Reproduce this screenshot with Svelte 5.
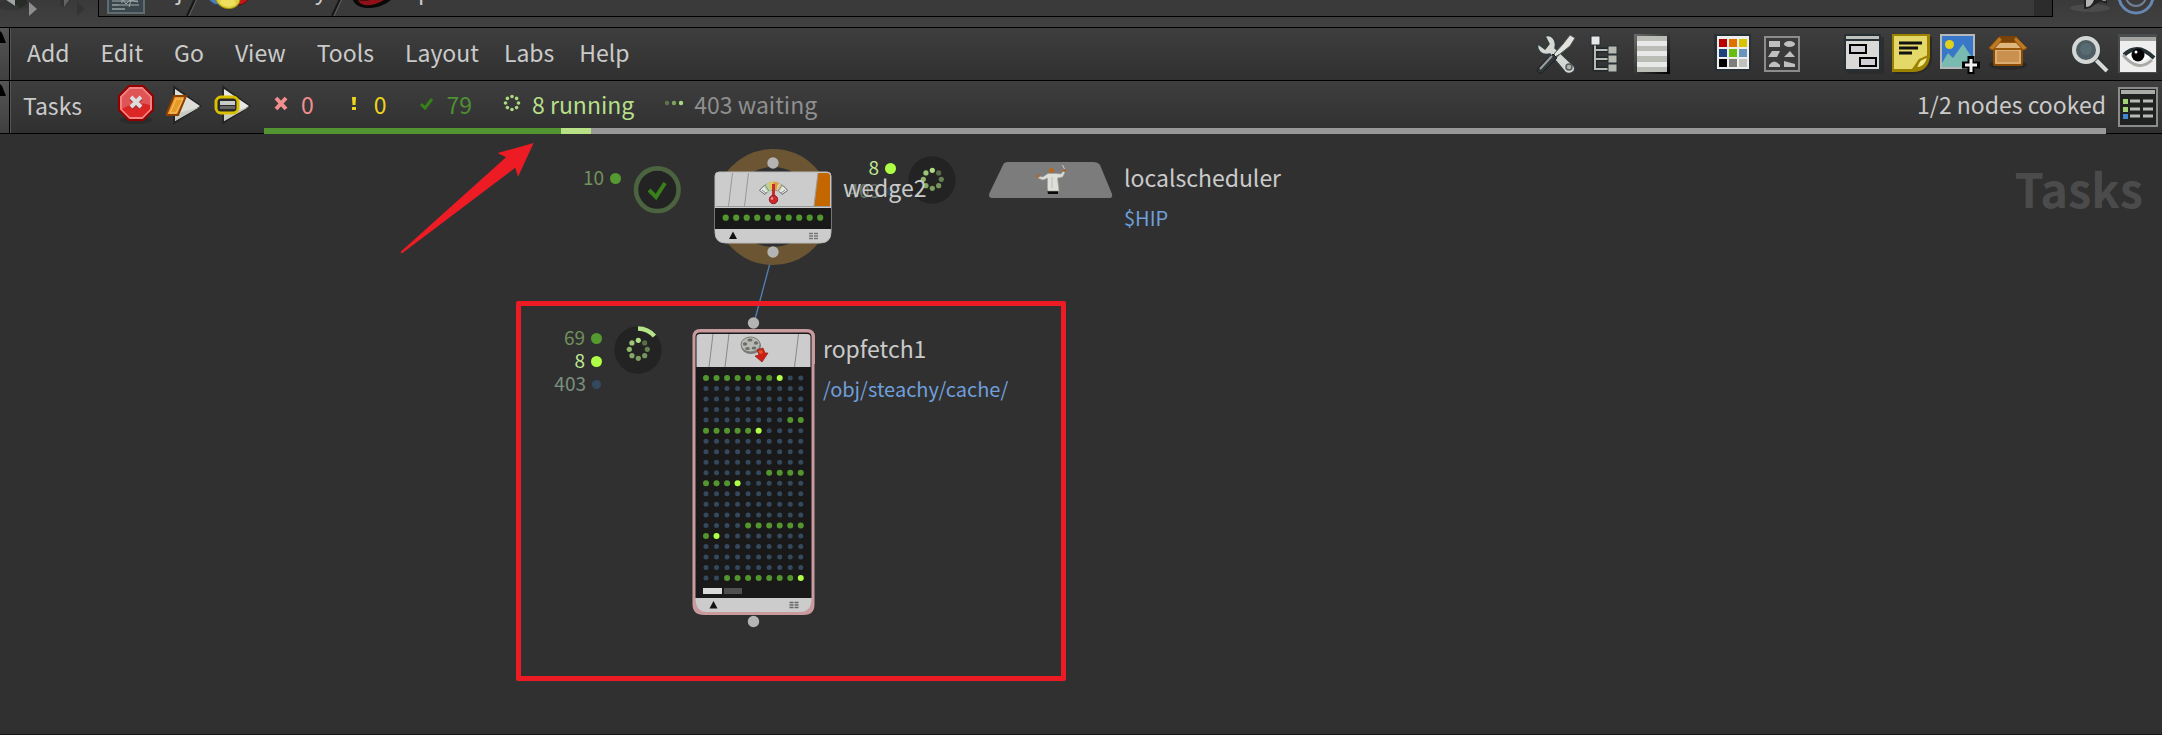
<script>
  const menus = ['Add', 'Edit', 'Go', 'View', 'Tools', 'Layout', 'Labs', 'Help'];

  const cooked = 79;
  const running = 8;
  const waiting = 403;
  const total = cooked + running + waiting;

  // c = cooked, r = running, w = waiting
  const workItems = [
    'cccccccrww',
    'wwwwwwwwww',
    'wwwwwwwwww',
    'wwwwwwwwww',
    'wwwwwwwwcc',
    'cccccrwwww',
    'wwwwwwwwww',
    'wwwwwwwwww',
    'wwwwwwwwww',
    'wwwwwwcccc',
    'cccrwwwwww',
    'wwwwwwwwww',
    'wwwwwwwwww',
    'wwwwwwwwww',
    'wwwwcccccc',
    'crwwwwwwww',
    'wwwwwwwwww',
    'wwwwwwwwww',
    'wwwwwwwwww',
    'wwcccccccr'
  ];

  const dotColors = { c: '#53962f', r: '#aeff46', w: '#34495e' };
  const swatches = ['#b80000', '#e07000', '#d8c400', '#1c437e', '#68bf14', '#6a93bd', '#000', '#7d7f7a', '#bfc1ba'];
  const spokes = [0, 1, 2, 3, 4, 5, 6, 7].map((i) => ({
    x: Math.sin((i * Math.PI) / 4),
    y: -Math.cos((i * Math.PI) / 4)
  }));
  const spokeColors = ['#b0dc85', '#5a6d49', '#66804f', '#76955c', '#7b9e5e', '#85a965', '#8fb56c', '#9cc577'];
</script>

{#snippet gutter()}
  <div class="gutter">
    <svg width="9" height="20" viewBox="0 0 9 20"><path d="M0 3L2 5L6 15H0Z" fill="#000" /></svg>
  </div>
{/snippet}

{#snippet spinner(arc)}
  <svg class="badge-icon" viewBox="0 0 48 48">
    <circle cx="24" cy="24" r="23.7" fill="#232323" />
    {#if arc}
      <path d="M24 2.5A21.5 21.5 0 0 1 40.4 10.2" fill="none" stroke="#b5e588" stroke-width="4.4" />
    {/if}
    {#each spokes as s, i}
      <circle cx={24.3 + s.x * 9} cy={23.3 + s.y * 9} r="2.6" fill={spokeColors[i]} />
    {/each}
  </svg>
{/snippet}

<div class="network-editor">
  <header class="path-strip">
    <div class="history">
      <svg width="90" height="54" viewBox="0 -38 90 54">
        <ellipse cx="13" cy="5" rx="17" ry="5" fill="#303030" opacity=".6" />
        <path d="M0 -8H27V4L20 8L17 5H14V7L3 -5Z" fill="#272c27" />
        <path d="M2 -3L7 -8H15V6Z" fill="#a0a4a0" />
        <path d="M29 2L37 9L29 16Z" fill="#8e8e8e" />
        <path d="M47 -6H70L73 -2L64 7L60 5V0H48Z" fill="#343434" />
        <path d="M64 7V-5H73Z" fill="#626262" />
        <path d="M77 2L85 9L77 16Z" fill="#343434" />
      </svg>
    </div>
    <div class="path-box">
      <svg class="crumb-icon" width="38" height="54" viewBox="106 -38 38 54">
        <rect x="106" y="-24" width="38" height="38" fill="#5f6d73" />
        <rect x="108" y="-22" width="34" height="34" fill="#39464b" />
        <path d="M112 -3L121 -2L125 4L129 0L137 2M111 1H137M111 5H138M121 3V-8M128 7L130 0" stroke="#a3abac" fill="none" />
        <path d="M111 9H124M111 5H118" stroke="#7e898b" stroke-width="2" />
      </svg>
      <span>obj</span>
      <svg class="slash" width="12" height="54" viewBox="0 -38 12 54"><path d="M0 16L25 -38" stroke="#161616" stroke-width="2" /><path d="M2 16L27 -38" stroke="#626262" /></svg>
      <svg class="crumb-icon" width="44" height="54" viewBox="208 -38 44 54">
        <circle cx="219" cy="-7" r="12" fill="#4d7fba" stroke="#26446a" />
        <circle cx="238" cy="-7" r="12" fill="#c31717" stroke="#6b0909" />
        <path d="M216 0C219 -3 221 -6 222 -10H234L240 0C238 11 221 12 216 0Z" fill="#dfcf3b" stroke="#9e8d0c" />
        <path d="M222 -3H233L236 4C230 8 224 7 220 3Z" fill="#fff184" opacity=".5" />
      </svg>
      <span>teachy</span>
      <svg class="slash" width="12" height="54" viewBox="0 -38 12 54"><path d="M0 16L25 -38" stroke="#161616" stroke-width="2" /><path d="M2 16L27 -38" stroke="#626262" /></svg>
      <svg class="crumb-icon" width="40" height="54" viewBox="355 -38 40 54">
        <path d="M355 0C359 12 384 10 395 -2V-15H357Z" fill="#090909" />
        <path d="M360 0C363 8 378 7 390 -3L383 -4C374 1 366 1 360 0Z" fill="#8f1017" />
        <path d="M363 -3C372 -2 379 -4 385 -8" stroke="#777" stroke-width="3" />
      </svg>
      <span>topnet1</span>
      <i></i>
    </div>
    <div class="pins">
      <svg width="109" height="54" viewBox="2053 -38 109 54">
        <ellipse cx="2090" cy="7" rx="20" ry="4" fill="#4b4b4b" />
        <path d="M2084 -10V8C2094 8 2094 1 2102 1L2107 3V-10Z" fill="#222" />
        <path d="M2086 -8V6C2092 6 2094 0 2096 -8Z" fill="#b4b4b4" />
        <path d="M2098 -4L2103 0H2106V-5Z" fill="#888" />
        <circle cx="2136" cy="-5" r="17" fill="none" stroke="#6786b1" stroke-width="3" />
        <circle cx="2136" cy="-5" r="10" fill="none" stroke="#718099" stroke-width="2" />
      </svg>
    </div>
  </header>

  <div class="row menu-row">
    {@render gutter()}
    <nav>
      {#each menus as menu}
        <button>{menu}</button>
      {/each}
    </nav>
    <div class="toolbar">
      <div class="group">
        <button aria-label="Tools">
          <svg viewBox="0 0 40 40">
            <path d="M9 2C16 0 21 6 19 14L38 32C41 37 34 42 29 38L14 20C6 22 0 17 2 10L9 15L13 10Z" fill="#d5d7d3" stroke="#303b3e" stroke-width="1.5" />
            <path d="M23 20L15 28" stroke="#555" stroke-width="2" />
            <path d="M34 1L39 4L34 12L24 20L19 23L18 20L27 10Z" fill="#e2e3dd" stroke="#4e5757" />
            <path d="M17 20L21 24L6 39C3 40 0 38 2 34Z" fill="#303537" stroke="#1b2022" />
            <path d="M16 22L4 35" stroke="#9b9f9f" stroke-width="2" />
            <circle cx="33" cy="33" r="3" fill="#b1b4ad" stroke="#555b59" stroke-width="1.5" />
          </svg>
        </button>
        <button aria-label="Tree view">
          <svg viewBox="0 0 40 40">
            <path d="M11 11V35H24M11 16H24M11 25H24" fill="none" stroke="#20282b" stroke-width="5" />
            <path d="M11 11V35H24M11 16H24M11 25H24" fill="none" stroke="#b8bbb3" stroke-width="2" />
            <rect x="7" y="2" width="9" height="9" fill="#e8e8e8" stroke="#263034" />
            <g fill="#b7bab3" stroke="#263034"><rect x="24" y="12" width="9" height="8" /><rect x="24" y="21" width="9" height="8" /><rect x="24" y="30" width="9" height="8" /></g>
          </svg>
        </button>
        <button aria-label="List view">
          <svg viewBox="0 0 40 40">
            <defs><linearGradient id="list-edge" x1="0" y1="0" x2="1" y2="1"><stop stop-color="#6a6a6a" /><stop offset=".7" stop-color="#222" /><stop offset="1" stop-color="#000" /></linearGradient></defs>
            <path d="M2 0H38V40H2Z" fill="url(#list-edge)" /><path d="M5 2H35V38H5Z" fill="#babdb5" /><path d="M5 7H35V12H5ZM5 17H35V22H5ZM5 28H35V33H5Z" fill="#e8e8e8" />
          </svg>
        </button>
      </div>
      <div class="group">
        <button aria-label="Color palette">
          <svg viewBox="0 0 40 40">
            <path d="M0 0H37V37H0Z" fill="#273035" /><path d="M3 2H35V35H3Z" fill="#eee" />
            {#each swatches as color, i}
              <rect x={5 + (i % 3) * 10} y={5 + Math.floor(i / 3) * 10} width="8" height="8" fill={color} />
            {/each}
          </svg>
        </button>
        <button aria-label="Shape palette">
          <svg viewBox="0 0 40 40">
            <rect x="3" y="3" width="34" height="34" fill="#3a3a3a" stroke="#8c8c8c" stroke-width="2" />
            <g fill="#bfbfbf"><path d="M7 7H18V13H7ZM10 17H18L15 23H6ZM28 17L33 23H22ZM7 33V31Q12 24 18 31V33ZM22 27L33 30V33H22Z" /><ellipse cx="27.500" cy="10" rx="5.500" ry="3" /></g>
          </svg>
        </button>
      </div>
      <div class="group">
        <button aria-label="Network box">
          <svg viewBox="0 0 40 40">
            <path d="M3 3H40V40H3Z" fill="#2a2a2a" opacity=".7" /><path d="M0 0H37V37H0Z" fill="#273035" /><path d="M2 2H35V5H2Z" fill="#bfc2bc" /><path d="M2 7H35V35H2Z" fill="#d9dad8" />
            <g fill="#d0d0d4" stroke="#000" stroke-width="2"><rect x="6" y="11" width="16" height="8" /><rect x="16" y="24" width="16" height="8" /></g>
          </svg>
        </button>
        <button aria-label="Sticky note">
          <svg viewBox="0 0 40 40">
            <path d="M3 3H40V28Q34 40 22 40H3Z" fill="#292929" /><path d="M0 0H38V23Q36 38 21 38H0Z" fill="#9c8200" /><path d="M2 2H35V23L27 25L20 35H2Z" fill="#e4d868" />
            <path d="M23 34C27 31 25 26 30 25L36 22C35 30 30 35 23 34Z" fill="#f2e987" stroke="#9c8200" stroke-width="2" /><path d="M7 9H30M7 14H26M7 19H20" stroke="#111" stroke-width="3" />
          </svg>
        </button>
        <button aria-label="Background image">
          <svg viewBox="0 0 40 40">
            <rect x="1" y="1" width="33" height="33" fill="#3977c9" stroke="#b5b7bb" stroke-width="2" /><circle cx="9.500" cy="10.500" r="4.500" fill="#e0d11c" />
            <path d="M2 33V29L8 19L13 24L23 10L33 25V33Z" fill="#79bbb1" /><path d="M31 22V40M22 31H40" stroke="#000" stroke-width="7" /><path d="M31 25V38M25 31H37" stroke="#eee" stroke-width="3" />
          </svg>
        </button>
        <button aria-label="Asset box">
          <svg viewBox="0 0 40 40">
            <ellipse cx="20" cy="31" rx="19" ry="5" fill="#292929" />
            <path d="M12 3H28L34 11H6Z" fill="#b46a0e" stroke="#774207" stroke-width="2" />
            <rect x="6" y="13" width="28" height="18" rx="1" fill="#ca904e" stroke="#8a4b05" stroke-width="2" /><rect x="8" y="16" width="24" height="13" fill="none" stroke="#edc997" />
            <path d="M10 8H29L36 15H4Z" fill="#deb57c" stroke="#985609" stroke-width="2" /><path d="M13 4H27L29 8H10Z" fill="#794407" /><path d="M11 3L1 14L5 16L14 6M28 3L39 14L35 16L26 6" fill="#bd7a25" stroke="#915106" />
          </svg>
        </button>
      </div>
      <div class="group">
        <button aria-label="Find">
          <svg viewBox="0 0 40 40">
            <path d="M25 25L37 37" stroke="#283033" stroke-width="7" /><path d="M25 25L37 37" stroke="#d7d8d6" stroke-width="4" />
            <circle cx="16" cy="16" r="14.500" fill="#353e42" stroke="#30383b" /><circle cx="16" cy="16" r="12" fill="#4f5e65" stroke="#d5d7d4" stroke-width="4" /><circle cx="16" cy="15" r="6" fill="#637780" opacity=".5" />
          </svg>
        </button>
        <button aria-label="Display options">
          <svg viewBox="0 0 40 40">
            <rect x="0" y="0" width="39" height="39" fill="#4a4d4e" /><path d="M2 3H38V38H2Z" fill="#eee" /><path d="M2 3H38V7H2Z" fill="#a2a59f" />
            <path d="M7 21Q20 11 34 21Q20 35 7 21Z" fill="#fff" /><path d="M6 21Q20 8 36 24" fill="none" stroke="#263136" stroke-width="4" /><path d="M5 21Q20 39 34 26" fill="none" stroke="#a9aca6" stroke-width="3" /><circle cx="20" cy="21" r="6.500" fill="#050505" /><circle cx="18" cy="18" r="1.500" fill="#fff" />
          </svg>
        </button>
      </div>
    </div>
  </div>

  <div class="row status-row">
    {@render gutter()}
    <span class="status-title">Tasks</span>
    <div class="cook-controls">
      <button aria-label="Cancel cook">
        <svg viewBox="0 0 40 40">
          <ellipse cx="18" cy="35" rx="16" ry="4" fill="#272727" opacity=".6" />
          <path d="M11 1H25L35 11V25L25 35H11L1 25V11Z" fill="#ef8583" stroke="#940000" stroke-width="2" /><path d="M12 4H24L32 12V24L24 32H12L4 24V12Z" fill="#df5555" /><path d="M4 24Q18 15 32 20V24L24 32H12Z" fill="#dc2626" />
          <path d="M13 13L23 23M23 13L13 23" stroke="#a83030" stroke-width="5" /><path d="M13 12L23 22M23 12L13 22" stroke="#ddd" stroke-width="4" />
        </svg>
      </button>
      <button aria-label="Dirty and cook selected">
        <svg viewBox="0 0 40 40">
          <path d="M7 0L36 21L7 40Z" fill="#252525" /><path d="M9 4L34 21L9 36Z" fill="#deded9" /><path d="M9 36L34 22L9 29Z" fill="#c7cbc0" /><path d="M8 11H20L12 30H0Z" fill="#e89a27" stroke="#8d3e02" stroke-width="2" /><path d="M10 14H17L10 28H4Z" fill="none" stroke="#f7c46d" />
        </svg>
      </button>
      <button aria-label="Cook selected">
        <svg viewBox="0 0 40 40">
          <path d="M8 0L37 21L8 40Z" fill="#252525" /><path d="M10 4L35 21L10 36Z" fill="#e7e8e5" /><path d="M10 36L35 22L10 29Z" fill="#c7cbc0" /><rect x="2" y="12" width="22" height="16" rx="5" fill="#292929" stroke="#d9bf00" stroke-width="3" /><path d="M6 16H21V20H6Z" fill="#c8cac8" /><path d="M6 21H21V24H6Z" fill="#656565" />
        </svg>
      </button>
    </div>
    <div class="summary">
      <div class="counts">
        <span class="count failed"><svg viewBox="0 0 16 16"><path d="M3 2L13 13M13 2L3 13" stroke="currentColor" stroke-width="4" /></svg>0</span>
        <span class="count warned"><svg viewBox="0 0 16 16"><path d="M6 1H10L9.500 9H6.500ZM6 11H10V14H6Z" fill="currentColor" /></svg>0</span>
        <span class="count cooked"><svg viewBox="0 0 16 16"><path d="M2 8L6 12L13 3" fill="none" stroke="#38801a" stroke-width="3" /></svg>{cooked}</span>
        <span class="count running">
          <svg viewBox="0 0 16 16">
            {#each spokes as s}
              <circle cx={8 + s.x * 6.5} cy={7 + s.y * 6.5} r="1.8" fill="#abda81" />
            {/each}
          </svg>{running} running
        </span>
        <span class="count waiting"><svg viewBox="0 0 16 16"><circle cx="1" cy="7" r="2.200" fill="#5f744f" /><circle cx="8" cy="7" r="2.200" fill="#7fa362" /><circle cx="15" cy="7" r="2.200" fill="#a9db7d" /></svg>{waiting} waiting</span>
        <span class="nodes-cooked">1/2 nodes cooked</span>
      </div>
      <div class="progress">
        <div class="done" style="width: {(cooked / total) * 100}%"></div>
        <div class="active" style="width: {(running / total) * 100}%"></div>
      </div>
    </div>
    <button class="details" aria-label="Task graph table">
      <svg viewBox="0 0 40 40">
        <rect x="1" y="1" width="38" height="38" fill="#202222" stroke="#8b8b8b" stroke-width="2" /><path d="M3 3H37V7H3Z" fill="#aaaca8" />
        <path d="M5 12H10V17H5ZM5 20H10V25H5Z" fill="#a3d475" /><path d="M5 27H10V32H5Z" fill="#3f86d5" /><path d="M12 14H22M25 14H35M12 22H22M25 22H35M12 29H22M25 29H35" stroke="#b8bab6" stroke-width="3" />
      </svg>
    </button>
  </div>

  <main class="canvas">
    <span class="watermark">Tasks</span>

    <!-- wire from wedge2 to ropfetch1 -->
    <svg class="wire" viewBox="740 110 50 90"><path d="M773 118L754 189" stroke="#527fb9" stroke-width="1.300" /></svg>

    <ul class="tallies wedge-tallies">
      <li class="tally-cooked">10<i></i></li>
    </ul>
    <div class="badge wedge-badge">
      <svg class="badge-icon" viewBox="0 0 48 48"><circle cx="24.300" cy="23.700" r="21.300" fill="#232323" stroke="#4c6340" stroke-width="4.600" /><path d="M16 24L23 31L32 17" fill="none" stroke="#38801a" stroke-width="4" /></svg>
    </div>

    <svg class="wedge-body" viewBox="714 14 118 118">
      <circle cx="773" cy="73" r="49" fill="none" stroke="#6b5532" stroke-width="18" />
      <g fill="#b4b4b4"><circle cx="773" cy="29" r="5.700" /><circle cx="773" cy="118" r="5.700" /></g>
      <path d="M715 42Q715 38 719 38H827Q831 38 831 42V98Q831 109 820 109H726Q715 109 715 98Z" fill="#ccc" stroke="#bbb" />
      <path d="M715 74H831V95H715Z" fill="#191919" />
      <path d="M818 39H827Q830 39 830 42V72H814Z" fill="#c46700" />
      <path d="M716 72.500H830M732.500 39L728.500 72M748.500 39L744.500 72M818 39L814 72" stroke="#999" fill="none" />
      {#each Array(10) as _, i}
        <circle cx={725.7 + i * 10.5} cy="83.700" r="3.100" fill={dotColors.c} />
      {/each}
      <path d="M733 97.500L737 105H729Z" fill="#111" />
      <path d="M809 99.500H818.500M809 102H818.500M809 104.500H818.500" stroke="#777" stroke-width="1.600" stroke-dasharray="4 1" />
      <!-- gauge with thermometer -->
      <path d="M759.500 56.500A16.500 16.500 0 0 1 787.500 56.500L782 60.500A10 10 0 0 0 765 60.500Z" fill="#e4e8e4" stroke="#6a6a6a" />
      <path d="M764 52L769 48L771 57L768 59Z" fill="#b9cf9c" /><path d="M768.500 48.500L773.500 47.500V56H770.500Z" fill="#dfc95a" />
      <path d="M773.500 47.500L778.500 48.500L776.500 56H773.500Z" fill="#e09a45" /><path d="M778.500 48.500L783 52L779 58L776.500 56Z" fill="#d8cc90" />
      <path d="M762 56L766 59M765 51L769 57M782 51L778 57M785 56L781 59" stroke="#75949a" />
      <path d="M773.500 50V62" stroke="#c3302a" stroke-width="3" /><circle cx="773.500" cy="65.500" r="4.200" fill="#cf272c" stroke="#8c2428" />
      <circle cx="772" cy="64.500" r="1.200" fill="#f0a0a0" />
    </svg>

    <ul class="tallies scheduler-tallies">
      <li class="tally-running">8<i></i></li>
      <li class="tally-waiting faded">403<i></i></li>
    </ul>
    <div class="badge scheduler-badge">{@render spinner(false)}</div>
    <div class="label wedge-label"><span>wedge2</span></div>

    <svg class="scheduler-body" viewBox="988 26 126 40">
      <path d="M1003 31Q1004 28 1008 28H1093Q1098 28 1100 31L1112 60Q1113 64 1109 64H992Q988 64 989.500 59Z" fill="#7c7c7c" />
      <!-- scientist in a lab coat -->
      <path d="M1047 55H1058V60H1048Z" fill="#090909" />
      <path d="M1048 39.500H1056L1061 40L1063.500 37L1065 38L1062.500 43L1057.500 44L1059 57H1047.500L1047.500 44L1043 46L1038 44L1039 42.500L1043 43Z" fill="#dedfd9" stroke="#a2a29e" stroke-width=".6" />
      <path d="M1052 43V54" stroke="#b9bcb7" /><circle cx="1051.500" cy="36.500" r="2.500" fill="#bb681e" />
      <circle cx="1038.300" cy="42" r="1.500" fill="#b36626" /><circle cx="1064.500" cy="36.500" r="1.500" fill="#b36626" /><path d="M1064.500 35L1062.500 31" stroke="#ccc" />
    </svg>
    <div class="label scheduler-label"><span>localscheduler</span><a href="#hip">$HIP</a></div>

    <ul class="tallies rop-tallies">
      <li class="tally-cooked">69<i></i></li>
      <li class="tally-running">8<i></i></li>
      <li class="tally-waiting">403<i></i></li>
    </ul>
    <div class="badge rop-badge">{@render spinner(true)}</div>

    <svg class="rop-body" viewBox="690 182 128 314">
      <g fill="#b4b4b4"><circle cx="753.500" cy="189" r="5.700" /><circle cx="753.500" cy="487.500" r="5.700" /></g>
      <path d="M700 195H807Q815 195 815 203V230H814.500V470Q814.500 481 804 481H704Q692.500 481 692.500 470V203Q692.500 195 700 195Z" fill="#c99b9e" />
      <path d="M695.500 203Q695.500 198.500 700 198.500H807Q811.500 198.500 811.500 203V464H695.500Z" fill="#191919" />
      <path d="M696.500 203Q696.500 200 700 200H807Q810.500 200 810.500 203V233H696.500Z" fill="#ccc" />
      <path d="M695.500 464H811.500Q811.500 478 800 478H707Q695.500 478 695.500 464Z" fill="#ccc" />
      <path d="M713 200L709 233M729 200L725 233M798.500 200L794.500 233" stroke="#888" />
      {#each workItems as line, row}
        {#each line as item, col}
          <circle cx={706 + col * 10.53} cy={244 + row * 10.53} r={item === 'w' ? 2.5 : 3} fill={dotColors[item]} />
        {/each}
      {/each}
      <path d="M703 454H722V460H703Z" fill="#dadada" /><path d="M724 454H742V460H724Z" fill="#505050" />
      <path d="M713.500 467L717.500 474.500H709.500Z" fill="#111" />
      <path d="M789.500 468.500H799M789.500 471H799M789.500 473.500H799" stroke="#666" stroke-width="1.600" stroke-dasharray="4 1" />
      <!-- film reel with a red arrow -->
      <ellipse cx="751" cy="212" rx="10" ry="8" fill="#777" /><ellipse cx="750.500" cy="210.500" rx="9.500" ry="7.500" fill="#b9b9b3" stroke="#7c7c79" />
      <g fill="#6c6c69"><ellipse cx="750" cy="206" rx="2.600" ry="1.600" /><ellipse cx="756" cy="209" rx="2.200" ry="1.700" /><ellipse cx="745" cy="210" rx="2.200" ry="1.700" /><ellipse cx="747.500" cy="214.500" rx="2.300" ry="1.600" /><ellipse cx="754" cy="214" rx="2.300" ry="1.600" /></g>
      <path d="M757 216L763 214L765 219L768 219L762 228L755 222L759 221Z" fill="#cc2015" stroke="#941c10" stroke-width=".7" /><path d="M758 217L762 216L763 219L760 220Z" fill="#df5427" />
    </svg>
    <div class="label rop-label"><span>ropfetch1</span><a href="#cache">/obj/steachy/cache/</a></div>

    <div class="highlight"></div>
    <svg class="pointer" viewBox="400 8 136 114"><path d="M533.700 9L497.700 19L506 23.300L401 117.500Q400 119.500 402.500 119L515.300 33.700L518 42.700Z" fill="#ed1c24" /></svg>
  </main>
</div>

<style>
  :global(body) {
    background: #303030;
  }

  .network-editor {
    display: flex;
    flex-direction: column;
    min-height: 100vh;
    box-sizing: border-box;
    border-bottom: 1px solid #161616;
    overflow: hidden;
    font-family: "Noto Sans CJK SC", "Open Sans", sans-serif;
    font-size: 23px;
    line-height: 28px;
    color: #cacaca;
  }

  button {
    padding: 0;
    border: 0;
    background: none;
    color: inherit;
    font: inherit;
    cursor: pointer;
  }

  svg {
    display: block;
    flex: none;
  }

  .path-strip {
    display: flex;
    align-items: flex-end;
    height: 27px;
    box-sizing: border-box;
    padding-bottom: 10px;
    overflow: hidden;
    background: linear-gradient(#3a3a3a, #414141);
  }

  .history {
    width: 98px;
    margin-bottom: 1px;
  }

  .path-box {
    flex: 1;
    display: flex;
    align-items: center;
    height: 54px;
    padding-left: 8px;
    border: 1px solid #000;
    border-top: 0;
    background: #3a3a3a;
  }

  .path-box span {
    padding-left: 3px;
  }

  .path-box i {
    width: 18px;
    height: 54px;
    margin-left: auto;
    background: #2c2c2c;
  }

  .slash {
    margin: 0 9px 0 5px;
    overflow: visible;
  }

  .row {
    display: flex;
    align-items: center;
    height: 53px;
    box-sizing: border-box;
    background: linear-gradient(#3e3e3e, #303030);
  }

  .menu-row {
    border-top: 1px solid #000;
    border-bottom: 1px solid #000;
    height: 54px;
  }

  .status-row {
    border-bottom: 1px solid #000;
  }

  .gutter {
    align-self: stretch;
    width: 9px;
    border-right: 1px solid #000;
    box-shadow: 1px 0 #555;
    background: linear-gradient(#555, #404040);
  }

  nav {
    display: flex;
    gap: 25px;
    padding: 0 0 4px 17px;
  }

  nav button:nth-child(-n + 5) {
    margin-right: 6px;
  }

  .toolbar {
    display: flex;
    gap: 42px;
    margin-left: auto;
    padding-right: 4px;
  }

  .group {
    display: flex;
    gap: 8px;
  }

  .toolbar svg,
  .cook-controls svg,
  .details svg {
    width: 40px;
    height: 40px;
  }

  .status-title {
    width: 95px;
    box-sizing: border-box;
    padding: 0 0 4px 13px;
  }

  .cook-controls {
    display: flex;
    gap: 8px;
    padding: 0 10px 4px 13px;
  }

  .summary {
    flex: 1;
    align-self: flex-start;
  }

  .counts {
    display: flex;
    align-items: center;
    gap: 32px;
    height: 45px;
    padding: 0 0 2px 9px;
    white-space: nowrap;
  }

  .count {
    display: flex;
    align-items: center;
    gap: 12px;
  }

  .count svg {
    width: 16px;
    height: 16px;
    overflow: visible;
  }

  .failed {
    color: #f28e8e;
  }

  .warned {
    color: #ecd51d;
  }

  .cooked {
    color: #4f9030;
  }

  .running {
    color: #b7df8a;
  }

  .waiting {
    color: #8f8f8f;
  }

  .nodes-cooked {
    margin-left: auto;
  }

  .progress {
    display: flex;
    height: 6px;
    background: #989898;
  }

  .done {
    background: #529432;
  }

  .active {
    background: #b7e087;
  }

  .details {
    margin: 0 4px 0 12px;
  }

  .canvas {
    position: relative;
    flex: 1;
    min-height: 560px;
    background: #303030;
  }

  .canvas > svg,
  .badge,
  .tallies,
  .label,
  .highlight {
    position: absolute;
  }

  .watermark {
    position: absolute;
    top: 24px;
    right: 19px;
    color: #4b4b4b;
    font-size: 47px;
    font-weight: 700;
    line-height: 60px;
  }

  .wire {
    left: 740px;
    top: 110px;
    width: 50px;
    height: 90px;
  }

  .wedge-body {
    left: 714px;
    top: 14px;
    width: 118px;
    height: 118px;
  }

  .scheduler-body {
    left: 988px;
    top: 26px;
    width: 126px;
    height: 40px;
  }

  .rop-body {
    left: 690px;
    top: 182px;
    width: 128px;
    height: 314px;
  }

  .badge-icon {
    width: 48px;
    height: 48px;
  }

  .wedge-badge {
    left: 633px;
    top: 32px;
  }

  .scheduler-badge {
    left: 908px;
    top: 22px;
  }

  .rop-badge {
    left: 614px;
    top: 192px;
  }

  .tallies {
    width: 62px;
    margin: 0;
    padding: 0;
    list-style: none;
    font-size: 19px;
    line-height: 23px;
  }

  .tallies li {
    display: flex;
    align-items: center;
    justify-content: flex-end;
    gap: 6px;
  }

  .tallies i {
    width: 11px;
    height: 11px;
    margin-top: 4px;
    border-radius: 50%;
    background: #559a30;
  }

  .tallies .tally-running i {
    background: #aeff46;
  }

  .tallies .tally-waiting i {
    width: 9px;
    height: 9px;
    margin-right: 1px;
    background: #34495f;
  }

  .tally-cooked {
    color: #70915c;
  }

  .tally-running {
    color: #bfe896;
  }

  .tally-waiting {
    color: #7b917f;
  }

  .faded {
    opacity: 0.7;
  }

  .wedge-tallies {
    left: 559px;
    top: 31px;
  }

  .scheduler-tallies {
    left: 834px;
    top: 21px;
  }

  .rop-tallies {
    left: 540px;
    top: 191px;
  }

  .label {
    display: flex;
    flex-direction: column;
    gap: 13px;
    white-space: nowrap;
  }

  .label a {
    color: #6f9fdb;
    font-size: 20px;
    text-decoration: none;
  }

  .wedge-label {
    left: 843px;
    top: 39px;
  }

  .scheduler-label {
    left: 1124px;
    top: 29px;
  }

  .rop-label {
    left: 823px;
    top: 200px;
  }

  .highlight {
    left: 516px;
    top: 167px;
    width: 550px;
    height: 380px;
    box-sizing: border-box;
    border: 5px solid #ed1c24;
    border-radius: 2px;
  }

  .pointer {
    left: 400px;
    top: 8px;
    width: 136px;
    height: 114px;
  }
</style>
